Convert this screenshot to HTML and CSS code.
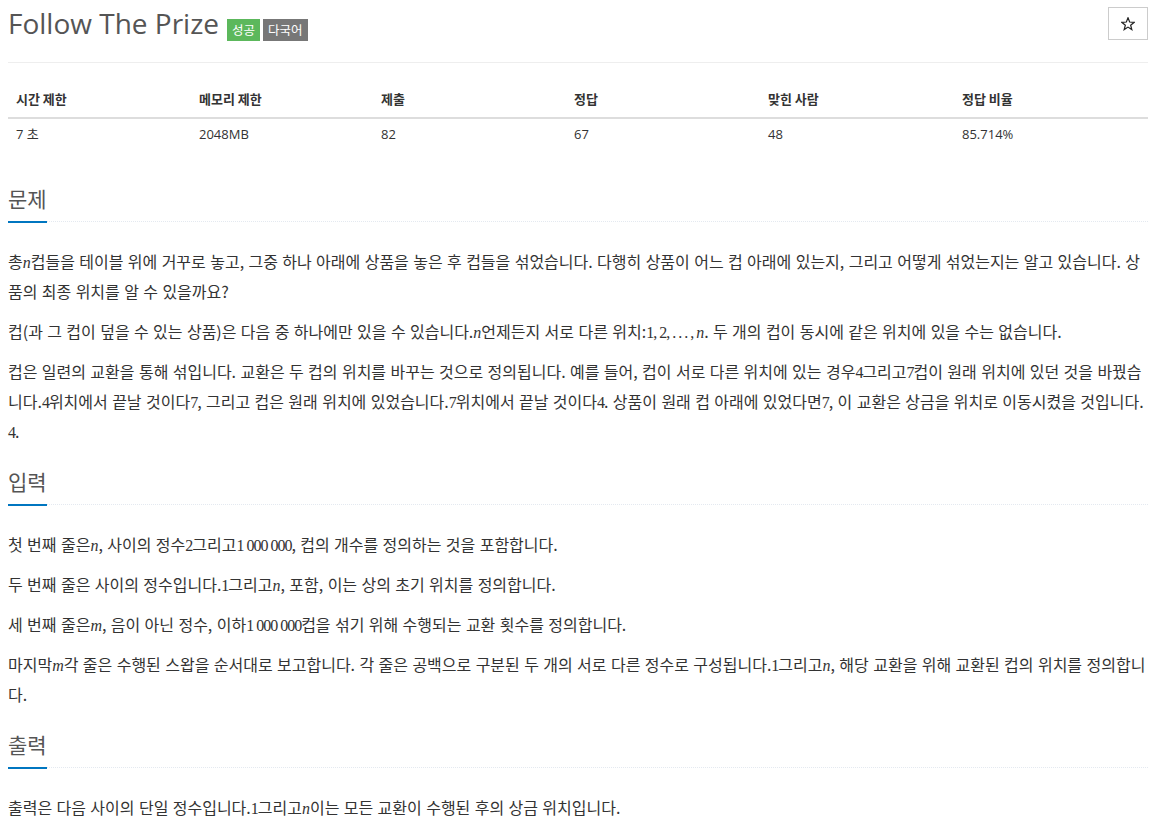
FILE: index.html
```html
<!DOCTYPE html>
<html>
<head>
	<title>Follow The Prize</title>
	<meta charset="utf-8">
	<link rel="stylesheet" href="styles.css">
</head>
<body>
	<div class="page">
		<div class="page-header">
			<h1 class="title">
				<span class="title-text">Follow The Prize</span>
				<span class="label label-success">성공</span>
				<span class="label label-default">다국어</span>
			</h1>
			<button class="btn-star" type="button">
				<svg width="14" height="14" viewBox="0 0 14 14">
					<polygon points="7,0.8 8.65,5.03 13.18,5.29 9.66,8.17 10.82,12.56 7,10.1 3.18,12.56 4.34,8.17 0.82,5.29 5.35,5.03" fill="none" stroke="#222" stroke-width="1.2" stroke-linejoin="miter"/>
				</svg>
			</button>
		</div>
		<hr class="divider">

		<table class="info">
			<thead>
				<tr>
					<th class="col-time">시간 제한</th>
					<th class="col-mem">메모리 제한</th>
					<th class="col-sub">제출</th>
					<th class="col-ac">정답</th>
					<th class="col-user">맞힌 사람</th>
					<th class="col-rate">정답 비율</th>
				</tr>
			</thead>
			<tbody>
				<tr>
					<td>7 초</td>
					<td>2048MB</td>
					<td>82</td>
					<td>67</td>
					<td>48</td>
					<td>85.714%</td>
				</tr>
			</tbody>
		</table>

		<section class="problem-section">
			<div class="headline"><h2>문제</h2></div>
			<div class="problem-text">
				<p>총<span class="math"><i>n</i></span>컵들을 테이블 위에 거꾸로 놓고, 그중 하나 아래에 상품을 놓은 후 컵들을 섞었습니다. 다행히 상품이 어느 컵 아래에 있는지, 그리고 어떻게 섞었는지는 알고 있습니다. 상품의 최종 위치를 알 수 있을까요?</p>
				<p>컵(과 그 컵이 덮을 수 있는 상품)은 다음 중 하나에만 있을 수 있습니다.<span class="math"><i>n</i></span>언제든지 서로 다른 위치:<span class="math">1,&nbsp;2,&nbsp;.&nbsp;.&nbsp;.&nbsp;,&nbsp;<i>n</i></span>. 두 개의 컵이 동시에 같은 위치에 있을 수는 없습니다.</p>
				<p>컵은 일련의 교환을 통해 섞입니다. 교환은 두 컵의 위치를 바꾸는 것으로 정의됩니다. 예를 들어, 컵이 서로 다른 위치에 있는 경우<span class="math">4</span>그리고<span class="math">7</span>컵이 원래 위치에 있던 것을 바꿨습니다.<span class="math">4</span>위치에서 끝날 것이다<span class="math">7</span>, 그리고 컵은 원래 위치에 있었습니다.<span class="math">7</span>위치에서 끝날 것이다<span class="math">4</span>. 상품이 원래 컵 아래에 있었다면<span class="math">7</span>, 이 교환은 상금을 위치로 이동시켰을 것입니다. <span class="math">4</span>.</p>
			</div>
		</section>

		<section class="problem-section">
			<div class="headline"><h2>입력</h2></div>
			<div class="problem-text">
				<p>첫 번째 줄은<span class="math"><i>n</i></span>, 사이의 정수<span class="math">2</span>그리고<span class="math">1&nbsp;000&nbsp;000</span>, 컵의 개수를 정의하는 것을 포함합니다.</p>
				<p>두 번째 줄은 사이의 정수입니다.<span class="math">1</span>그리고<span class="math"><i>n</i></span>, 포함, 이는 상의 초기 위치를 정의합니다.</p>
				<p>세 번째 줄은<span class="math"><i>m</i></span>, 음이 아닌 정수, 이하<span class="math">1&nbsp;000&nbsp;000</span>컵을 섞기 위해 수행되는 교환 횟수를 정의합니다.</p>
				<p>마지막<span class="math"><i>m</i></span>각 줄은 수행된 스왑을 순서대로 보고합니다. 각 줄은 공백으로 구분된 두 개의 서로 다른 정수로 구성됩니다.<span class="math">1</span>그리고<span class="math"><i>n</i></span>, 해당 교환을 위해 교환된 컵의 위치를 정의합니다.</p>
			</div>
		</section>

		<section class="problem-section">
			<div class="headline"><h2>출력</h2></div>
			<div class="problem-text">
				<p>출력은 다음 사이의 단일 정수입니다.<span class="math">1</span>그리고<span class="math"><i>n</i></span>이는 모든 교환이 수행된 후의 상금 위치입니다.</p>
			</div>
		</section>
	</div>
</body>
</html>
```

FILE: styles.css
```css
*, *:before, *:after {
	box-sizing: border-box;
}

body {
	margin: 0;
	font-family: 'Open Sans', 'Noto Sans CJK KR', sans-serif;
	color: #333;
	background: #fff;
}

.page {
	padding: 7px 11px 0 8px;
}

/* header */
.page-header {
	display: flex;
	justify-content: space-between;
	align-items: flex-start;
}

.title {
	display: flex;
	align-items: flex-start;
	margin: 1px 0 0;
	font-size: 28px;
	font-weight: 400;
	line-height: 1.1;
	color: #555;
}

.label {
	margin-top: 11px;
	padding: 0 5px;
	font-family: 'Noto Sans CJK KR', sans-serif;
	font-size: 12.5px;
	line-height: 22px;
	color: #fff;
}

.label-success {
	margin-left: 8px;
	background: #5cb85c;
}

.label-default {
	margin-left: 3px;
	background: #777;
}

.btn-star {
	display: flex;
	align-items: center;
	justify-content: center;
	width: 40px;
	height: 33px;
	padding: 0;
	background: #fff;
	border: 1px solid #ccc;
	border-radius: 0;
}

.divider {
	margin: 21px 0 19px;
	border: 0;
	border-top: 1px solid #eee;
}

/* info table */
.info {
	width: 100%;
	border-collapse: collapse;
	table-layout: fixed;
	margin-bottom: 38px;
	font-size: 13px;
}

.info th,
.info td {
	padding: 8px;
	line-height: 18.6px;
	text-align: left;
}

.info th {
	font-family: 'Noto Sans CJK KR', sans-serif;
	font-size: 13px;
	font-weight: 700;
	border-bottom: 2px solid #ddd;
}

.info td {
	padding-bottom: 6px;
	padding-top: 6px;
}

.col-time { width: 183px; }
.col-mem { width: 182px; }
.col-sub { width: 193px; }
.col-ac { width: 194px; }
.col-user { width: 194px; }

/* sections */
.problem-section {
	margin-top: 24px;
}

.headline {
	margin-bottom: 24px;
	border-bottom: 1px dotted #e4e9f0;
}

.headline h2 {
	display: inline-block;
	margin: 0 0 -2px;
	padding-bottom: 11px;
	font-family: 'Noto Sans CJK KR', sans-serif;
	font-size: 21px;
	font-weight: 400;
	line-height: 1.1;
	color: #555;
	border-bottom: 2px solid #0076c0;
}

.problem-text p {
	margin: 0 0 10px;
	font-family: 'Noto Sans CJK KR', sans-serif;
	font-size: 16px;
	line-height: 30px;
	word-spacing: 0.8px;
}

/* inline math, digits set tight */
.math {
	display: inline-block;
	font-family: 'Liberation Serif', serif;
	font-size: 16px;
	letter-spacing: -1px;
	line-height: 1;
	word-spacing: 0;
}

.math i {
	letter-spacing: 0;
}
```
